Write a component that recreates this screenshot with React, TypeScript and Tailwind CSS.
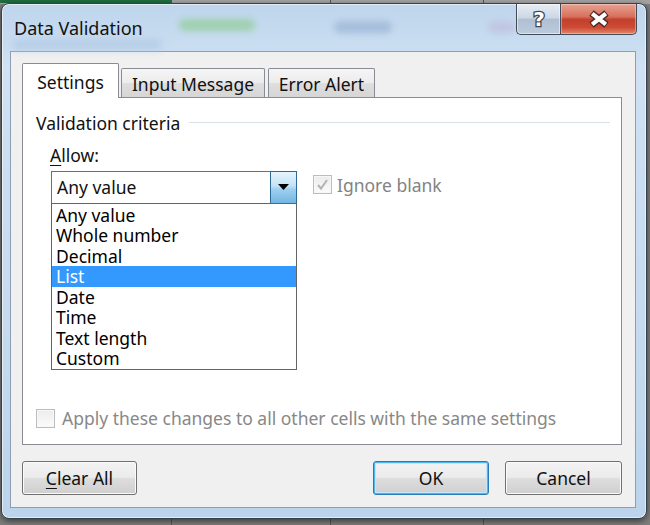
import React from 'react';

// Excel "Data Validation" dialog, Windows 7 look

const items = ['Any value', 'Whole number', 'Decimal', 'List', 'Date', 'Time', 'Text length', 'Custom'];

const btn =
  "flex h-[34px] items-center justify-center rounded-[3px] border text-[17.5px] leading-[24px] text-[#111] bg-[linear-gradient(#f3f3f3,#ebebeb_48%,#dddddd_52%,#cfcfcf)]";

const Checkbox = ({ checked }: { checked?: boolean }) => (
  <div className="flex h-[19px] w-[19px] items-center justify-center border border-[#bdbdbd] bg-[linear-gradient(#ececec,#fbfbfb)] shadow-[inset_0_0_0_1px_#f7f7f7]">
    {checked && (
      <svg width="13" height="13" viewBox="0 0 13 13">
        <path d="M2 7 L5 10.5 L11 2" fill="none" stroke="#b3b3b3" strokeWidth="2" />
      </svg>
    )}
  </div>
);

export default function App() {
  return (
    <div className="relative h-[525px] w-[650px] overflow-hidden bg-[#7e7e7e] font-['Noto_Sans',sans-serif]">
      {/* sheet behind the dialog */}
      <div className="absolute inset-x-0 top-0 h-[4px] bg-[#a4a4a4]" />
      <div className="absolute left-0 top-0 h-[3px] w-[171px] bg-[#1f6d41]" />
      <div className="absolute bottom-0 top-0 left-[171px] w-px bg-[#555]" />
      <div className="absolute bottom-0 top-0 left-[330px] w-px bg-[#555]" />
      <div className="absolute bottom-0 top-0 left-[483px] w-px bg-[#555]" />

      {/* window */}
      <div className="relative ml-px mt-[3px] flex h-[516px] w-[646px] flex-col rounded-[8px] border border-[#3a4048] bg-[linear-gradient(#bed5ec,#cfe1f3_12%,#c6dbef_60%,#bbd4ec)] shadow-[0_2px_6px_rgba(0,0,0,0.55),inset_0_0_0_1px_rgba(255,255,255,0.55)]">
        {/* title bar */}
        <div className="relative flex h-[47px] items-start">
          <div className="pointer-events-none absolute left-[177px] top-[15px] h-[12px] w-[76px] rounded-full bg-[#9fd0b0] blur-[3px]" />
          <div className="pointer-events-none absolute left-[332px] top-[17px] h-[12px] w-[58px] rounded-full bg-[#a6bedb] blur-[3px]" />
          <div className="pointer-events-none absolute left-[486px] top-[17px] h-[12px] w-[28px] rounded-full bg-[#c0c6e2] blur-[3px]" />
          <div className="pointer-events-none absolute left-[10px] top-[36px] h-[9px] w-[150px] rounded-full bg-[#b2cbe5] blur-[4px]" />
          <div className="relative pl-[12px] pt-[12px] text-[18px] leading-[24px] text-[#111]">Data Validation</div>
          <div className="relative ml-auto mr-[9px] flex h-[31px]">
            <div className="flex w-[44px] items-center justify-center rounded-bl-[5px] border border-t-0 border-r-0 border-[#434b56] bg-[linear-gradient(#e6ecf3,#cdd8e5_45%,#b0bfd2_52%,#bccbdc)] shadow-[inset_0_0_0_1px_rgba(255,255,255,0.5)]">
              <svg width="18" height="22" viewBox="0 0 18 22">
                <text x="9" y="18" textAnchor="middle" fontSize="20" fontWeight="700" fontFamily="DejaVu Sans, sans-serif" fill="#fff" stroke="#3e4650" strokeWidth="2.6" paintOrder="stroke">?</text>
              </svg>
            </div>
            <div className="flex w-[77px] items-center justify-center rounded-br-[5px] border border-t-0 border-[#434b56] bg-[linear-gradient(#e7a393,#d7705c_42%,#c33f2b_52%,#cc4b35_78%,#e3876a)] shadow-[inset_0_0_0_1px_rgba(255,220,210,0.45)]">
              <svg width="24" height="18" viewBox="0 0 24 18">
                <path d="M4.5 3 L19.5 15 M19.5 3 L4.5 15" stroke="#4a2b27" strokeWidth="7" />
                <path d="M5.2 3.6 L18.8 14.4 M18.8 3.6 L5.2 14.4" stroke="#fff" strokeWidth="4.2" />
              </svg>
            </div>
          </div>
        </div>

        {/* client area */}
        <div className="ml-[8px] flex h-[457px] w-[626px] flex-col border border-[#8e9db2] bg-[#f0f0f0] pl-[11px] pt-[11px]">
          {/* tabs */}
          <div className="flex h-[34px] items-end">
            <div className="relative z-10 -mb-px h-[35px] w-[97px] rounded-t-[2px] border border-b-0 border-[#898c95] bg-white pt-[6px] text-center text-[17.5px] leading-[24px] text-[#111]">
              Settings
            </div>
            <div className="ml-[2px] h-[29px] w-[144px] rounded-t-[2px] border border-b-0 border-[#898c95] bg-[linear-gradient(#f5f5f5,#ececec_50%,#dedede_52%,#d6d6d6)] pt-[3px] text-center text-[17.5px] leading-[24px] text-[#111]">
              Input Message
            </div>
            <div className="ml-[3px] h-[29px] w-[107px] rounded-t-[2px] border border-b-0 border-[#898c95] bg-[linear-gradient(#f5f5f5,#ececec_50%,#dedede_52%,#d6d6d6)] pt-[3px] text-center text-[17.5px] leading-[24px] text-[#111]">
              Error Alert
            </div>
          </div>

          {/* tab panel */}
          <div className="flex h-[348px] w-[600px] flex-col border border-[#898c95] bg-white text-[17.5px] leading-[24px] text-[#111]">
            <div className="flex items-center pl-[13px] pr-[11px] pt-[12.5px]">
              <span>Validation criteria</span>
              <div className="ml-[9px] h-px flex-1 bg-[#d8e0e6]" />
            </div>
            <div className="mt-[8px] pl-[27px]">
              <span className="underline underline-offset-[3px]">A</span>llow:
            </div>
            <div className="mt-[4px] flex items-start pl-[28px]">
              <div className="relative flex h-[33px] w-[246px]">
                <div className="flex-1 border border-r-0 border-[#6f6f6f] bg-white pl-[5px] leading-[31px]">Any value</div>
                <div className="flex w-[27px] items-center justify-center border border-[#2f6a96] bg-[linear-gradient(#e6f4fc,#c2e2f6_45%,#9fd0f0_55%,#74b6e2)]">
                  <svg width="11" height="6" viewBox="0 0 11 6">
                    <path d="M0 0 H11 L5.5 6 Z" fill="#000" />
                  </svg>
                </div>
                {/* open dropdown */}
                <div className="absolute left-0 top-[32px] z-10 h-[167px] w-[246px] border border-[#646464] bg-white pt-px">
                  {items.map((it) => (
                    <div
                      key={it}
                      className={
                        it === 'List'
                          ? 'h-[20.5px] bg-[#3399ff] pl-[4px] leading-[20.5px] text-white'
                          : 'h-[20.5px] pl-[4px] leading-[20.5px] text-black'
                      }
                    >
                      {it}
                    </div>
                  ))}
                </div>
              </div>
              <div className="ml-[16px] mt-[2px] flex items-center gap-[5px] text-[#838383]">
                <Checkbox checked />
                <span>Ignore blank</span>
              </div>
            </div>

            <div className="mt-auto flex items-center gap-[7px] pb-[14px] pl-[13px] text-[#888]">
              <Checkbox />
              <span>Apply these changes to all other cells with the same settings</span>
            </div>
          </div>

          {/* buttons */}
          <div className="mt-[16px] flex w-[600px]">
            <button className={`${btn} w-[115px] border-[#707070] shadow-[inset_0_0_0_1px_#fbfbfb]`}>
              <span>
                <span className="underline underline-offset-[3px]">C</span>lear All
              </span>
            </button>
            <button className={`${btn} ml-auto w-[116px] border-[#2a7ab8] shadow-[inset_0_0_0_1px_#4fb7ee,inset_0_0_0_2px_#c4e6f8]`}>
              OK
            </button>
            <button className={`${btn} ml-[16px] w-[117px] border-[#707070] shadow-[inset_0_0_0_1px_#fbfbfb]`}>
              Cancel
            </button>
          </div>
        </div>
      </div>
    </div>
  );
}
